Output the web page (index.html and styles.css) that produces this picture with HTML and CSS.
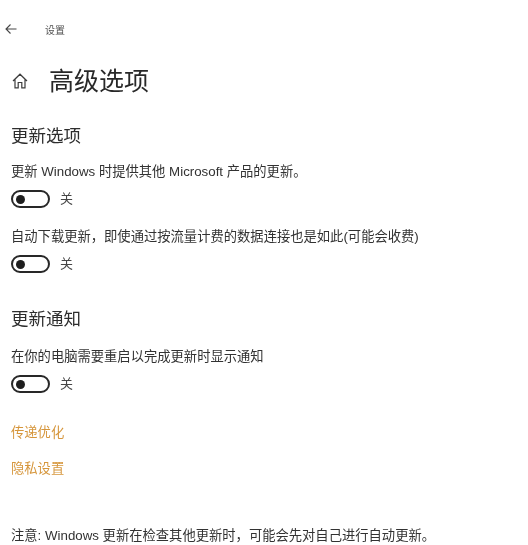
FILE: index.html
```html
<!DOCTYPE html>
<html lang="zh-CN">

<head>
    <meta charset="UTF-8">
    <title>设置</title>
    <link rel="stylesheet" href="styles.css">
</head>

<body>
    <div class="top_bar">
        <svg class="back_icon" width="12" height="12" viewBox="0 0 12 12">
            <path d="M11.5 6H1M5.5 1.5 1 6l4.5 4.5" />
        </svg>
        <span class="top_title">设置</span>
    </div>

    <div class="page_title">
        <svg class="home_icon" width="16" height="16" viewBox="0 0 16 16">
            <path d="M1 8 8 1.2 15 8M3 6.5V14.8H6.2V9.5H9.8V14.8H13V6.5" />
        </svg>
        <h1>高级选项</h1>
    </div>

    <h2 class="section_one">更新选项</h2>
    <p class="option_label first_label">更新 Windows 时提供其他 Microsoft 产品的更新。</p>
    <div class="toggle_row">
        <span class="toggle"></span>
        <span class="toggle_text">关</span>
    </div>
    <p class="option_label">自动下载更新，即使通过按流量计费的数据连接也是如此(可能会收费)</p>
    <div class="toggle_row">
        <span class="toggle"></span>
        <span class="toggle_text">关</span>
    </div>

    <h2 class="section_two">更新通知</h2>
    <p class="option_label first_label">在你的电脑需要重启以完成更新时显示通知</p>
    <div class="toggle_row">
        <span class="toggle"></span>
        <span class="toggle_text">关</span>
    </div>

    <div class="links">
        <a href="#">传递优化</a>
        <a href="#">隐私设置</a>
    </div>

    <p class="note">注意: Windows 更新在检查其他更新时，可能会先对自己进行自动更新。</p>
</body>

</html>
```

FILE: styles.css
```css
* {
    margin: 0;
    padding: 0;
    box-sizing: border-box;
}

body {
    width: 528px;
    height: 545px;
    overflow: hidden;
    padding: 21px 0 0 11px;
    background: white;
    font-family: "Liberation Sans", "Noto Sans CJK SC", sans-serif;
    color: rgb(50, 50, 50);
    filter: blur(0.6px);
}

.top_bar {
    display: flex;
    align-items: center;
    height: 16px;
    margin-left: -6px;
}

.back_icon {
    fill: none;
    stroke: rgb(70, 70, 70);
    stroke-width: 1.1;
}

.top_title {
    margin-left: 28px;
    font-size: 10px;
    color: rgb(80, 80, 80);
}

.page_title {
    display: flex;
    align-items: center;
    height: 36px;
    margin-top: 26px;
}

.home_icon {
    margin-left: 1px;
    fill: none;
    stroke: rgb(60, 60, 60);
    stroke-width: 1.2;
}

.page_title h1 {
    margin-left: 21px;
    font-size: 25px;
    font-weight: normal;
    line-height: 36px;
    color: rgb(40, 40, 40);
}

h2 {
    font-size: 17.5px;
    font-weight: normal;
    line-height: 24px;
    color: rgb(45, 45, 45);
}

.section_one {
    margin-top: 25px;
}

.section_two {
    margin-top: 34px;
    margin-bottom: 18px;
}

.option_label {
    margin-top: 21px;
    font-size: 13.3px;
    line-height: 16px;
}

.first_label {
    margin-top: 16px;
}

.toggle_row {
    display: flex;
    align-items: center;
    height: 18px;
    margin-top: 10px;
}

.toggle {
    position: relative;
    width: 39px;
    height: 18px;
    border: 2px solid rgb(40, 40, 40);
    border-radius: 9px;
}

.toggle::after {
    content: "";
    position: absolute;
    left: 3px;
    top: 2.5px;
    width: 9px;
    height: 9px;
    border-radius: 50%;
    background: rgb(30, 30, 30);
}

.toggle_text {
    margin-left: 10px;
    font-size: 13px;
    line-height: 16px;
    color: rgb(70, 70, 70);
}

.links {
    display: flex;
    flex-flow: column;
    gap: 19px;
    margin-top: 31px;
}

.links a {
    font-size: 13.3px;
    line-height: 17px;
    color: rgb(214, 150, 60);
    text-decoration: none;
}

.note {
    margin-top: 51px;
    font-size: 13.3px;
    line-height: 16px;
}
```
